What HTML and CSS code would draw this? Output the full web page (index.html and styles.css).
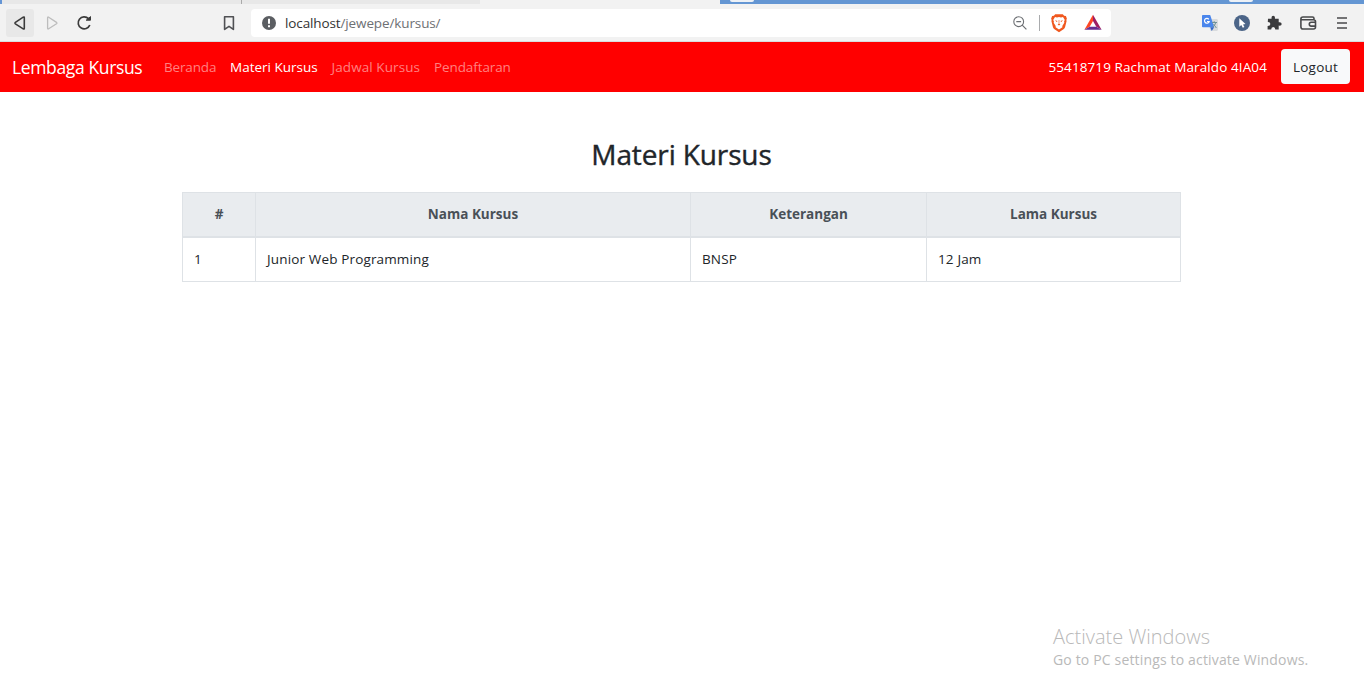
FILE: index.html
```html
<!DOCTYPE html>
<html lang="id">
<head>
<meta charset="utf-8">
<title>Materi Kursus</title>
<link rel="stylesheet" href="styles.css">
</head>
<body>
<header class="browser">
  <div class="tabstrip">
    <span class="tab-edge"></span><span class="tab tab-first"></span><span class="tab"></span><span class="tab-active"></span>
    <span class="frame"><i class="bump"></i><i class="bump"></i></span>
  </div>
  <div class="toolbar">
    <span class="back"><svg width="28" height="28" viewBox="0 0 28 28"><path d="M18.3 8.800v10.400q0 1.200-1.100.6l-7.800-5q-.9-.7 0-1.400l7.800-5.200q1.100-.6 1.100.6z" fill="none" stroke="#3b3b3b" stroke-width="1.600"/></svg></span>
    <svg class="forward" width="28" height="28" viewBox="0 0 28 28"><path d="M9.600 8.800v10.400q0 1.200 1.100.6l7.800-5q.9-.7 0-1.400l-7.800-5.200q-1.100-.6-1.100.6z" fill="none" stroke="#bdbdbd" stroke-width="1.300"/></svg>
    <svg class="reload" width="18" height="18" viewBox="0 0 18 18"><path d="M14.800 11a6 6 0 1 1-1.300-6.300" fill="none" stroke="#3b3b3b" stroke-width="1.700"/><path d="M11.200 6.200h4.300V2.600z" fill="#3b3b3b" stroke="#3b3b3b" stroke-linejoin="round"/></svg>
    <svg class="bookmark" width="14" height="18" viewBox="0 0 14 18"><path d="M2.600 2.700h8.800v12.700L7 12.300l-4.400 3.100z" fill="none" stroke="#505154" stroke-width="1.600" stroke-linejoin="round"/></svg>
    <div class="address">
      <svg class="info" width="14" height="14" viewBox="0 0 14 14"><circle cx="7" cy="7" r="7" fill="#5b5e62"/><path d="M7 2.800v5M7 9.200v2" stroke="#fff" stroke-width="2"/></svg>
      <span class="url"><b>localhost</b>/jewepe/kursus/</span>
      <svg class="magnify" width="16" height="16" viewBox="0 0 16 16"><circle cx="6.700" cy="6.700" r="4.900" fill="none" stroke="#6d7074" stroke-width="1.100"/><path d="M4.300 6.700h4.800M10.200 10.200l4.200 4.200" stroke="#6d7074" stroke-width="1.200"/></svg>
      <span class="divider"></span>
      <svg class="brave" width="18" height="20" viewBox="0 0 18 20"><path d="M5.200 1.200h7.600l1.300 1.500 1.800.3 1 2.700-.6 1.200.3 1-1.500 6.200q-.3 1.200-1.600 2.200L9 19.200l-4.500-2.900q-1.300-1-1.600-2.200L1.400 7.900l.3-1-.6-1.200 1-2.700 1.800-.3z" fill="#f0581f"/><path d="M5 4l2 .4L9 4l2 .4L13 4l1.800 3-.7 1.300.2 1.400-2 3.400.1 1.100L9 16.400l-3.400-2.200.1-1.100-2-3.400.2-1.400L3.200 7z" fill="#fff"/><path d="M5 7.300l2.600.7-.9 1zM13 7.300l-2.600.7.9 1zM8.700 7h.6v3.700l1.100.9L9 12.600l-1.400-1 1.100-.9z" fill="#f0581f"/></svg>
      <svg class="bat" width="18" height="17" viewBox="0 0 18 17"><path d="M9 .8L.4 15.800 5.700 12.700 9 6.900z" fill="#ff4724"/><path d="M9 .8l8.600 15L12.300 12.700 9 6.900z" fill="#9e1f63"/><path d="M.4 15.800h17.200l-5.300-3.100H5.700z" fill="#662d91"/></svg>
    </div>
    <svg class="ext translate" width="16" height="16" viewBox="0 0 16 16"><path d="M5.500 4H15l1 1v10l-1 1H8.500z" fill="#d9dbdd"/><path d="M0 .8Q0 0 .8 0h7.400l4 12.200H.8Q0 12.200 0 11.400z" fill="#4a86ec"/><path d="M8.300 12.200h3.900L9.700 16z" fill="#3367c6"/><path d="M6.800 4.300a2.400 2.400 0 1 0 .4 2.200H5" fill="none" stroke="#fff" stroke-width="1.200"/><path d="M10 7.500h5M12.200 6.200v1.300M13.800 7.500q-.8 3-3 4.500M11.500 9l2.900 4" fill="none" stroke="#6f9198" stroke-width="1"/></svg>
    <svg class="ext cursor" width="16" height="16" viewBox="0 0 16 16"><circle cx="8" cy="8" r="8" fill="#4c6588"/><path d="M5.300 3.200v8.600l2-1.700 1.500 2.700 1.600-.8L9 9.400l2.500-.3z" fill="#fff"/></svg>
    <svg class="ext puzzle" width="16" height="16" viewBox="0 0 16 16"><path d="M2 3.800h3.600q-.5-2.900 1.600-3 2.200.1 1.700 3h3.800v3.500q2.900-.5 3 1.600-.1 2.200-3 1.700v4H9.300q.1-2.500-2.100-2.600-2.100.1-2 2.600H1.600v-3.700q2.700.1 2.800-2-.1-2.100-2.600-2z" fill="#3a3a3c"/></svg>
    <svg class="ext wallet" width="17" height="14" viewBox="0 0 17 14"><path d="M14 3.800V2.500Q14 1 12.500 1H3Q.9 1 .9 3v7.700Q.9 13 3 13h10.500q2 0 2-2V5.500q0-1.700-2-1.700H1.200M15.500 6.300h-4.300q-1.900.1-1.900 1.900.1 1.900 1.900 1.900h4.300" fill="none" stroke="#48494b" stroke-width="1.600"/></svg>
    <svg class="ext menu" width="10" height="12" viewBox="0 0 10 12"><path d="M0 1h10M0 6h10M0 11h10" stroke="#4a4a4c" stroke-width="1.600"/></svg>
  </div>
</header>
<nav class="navbar">
  <a class="brand">Lembaga Kursus</a>
  <a class="link beranda">Beranda</a>
  <a class="link active">Materi Kursus</a>
  <a class="link jadwal">Jadwal Kursus</a>
  <a class="link daftar">Pendaftaran</a>
  <span class="user">55418719 Rachmat Maraldo 4IA04</span>
  <button class="logout">Logout</button>
</nav>
<main class="content">
  <h2>Materi Kursus</h2>
  <table>
    <colgroup><col class="c1"><col class="c2"><col class="c3"><col class="c4"></colgroup>
    <thead><tr><th>#</th><th>Nama Kursus</th><th>Keterangan</th><th>Lama Kursus</th></tr></thead>
    <tbody><tr><td>1</td><td>Junior Web Programming</td><td>BNSP</td><td>12 Jam</td></tr></tbody>
  </table>
</main>
<aside class="watermark"><p>Activate Windows</p><small>Go to PC settings to activate Windows.</small></aside>
</body>
</html>
```
FILE: styles.css
```css
* { box-sizing: border-box; }
body { margin: 0; height: 691px; overflow: hidden; background: #fff; color: #212529; font: 13.5px/21px "Open Sans", "Noto Sans", sans-serif; display: flex; flex-direction: column; }
svg { display: block; flex: none; }

/* Browser chrome */
.browser { height: 42px; background: #f2f2f2; border-bottom: 1px solid #d9dcdc; }
.tabstrip { height: 4px; display: flex; }
.tab-edge { width: 2px; background: #6495d5; }
.tab { width: 238px; background: #e8e8e8; }
.tab-first { width: 240px; border-right: 1px solid #aaa; }
.tab-active { width: 240px; }
.frame { flex: 1; background: #6496d3; display: flex; padding-left: 10px; gap: 475px; }
.bump { width: 24px; height: 2px; background: #edf1f6; border-radius: 0 0 4px 4px; }
.toolbar { height: 37px; display: flex; align-items: center; padding-left: 6px; }
.back { background: #e8e8e8; border-radius: 3px; }
.forward { margin-left: 4px; }
.reload { margin-left: 9px; }
.bookmark { margin-left: 129px; }
.address { margin-left: 15px; width: 860px; height: 28px; border-radius: 4px; background: #fff; display: flex; align-items: center; padding-left: 11px; }
.url { margin-left: 9px; padding-top: 1px; color: #6d7074; letter-spacing: -.12px; }
.url b { font-weight: 400; color: #333; }
.magnify { margin-left: auto; }
.divider { width: 1px; height: 16px; background: #a9abad; margin-left: 11px; }
.brave { margin-left: 10px; }
.bat { margin: 0 9px 0 16px; }
.translate { margin-left: 91px; }
.cursor { margin-left: 16px; }
.puzzle { margin-left: 16px; }
.wallet { margin-left: 18px; }
.menu { margin-left: 20px; }

/* Site navigation */
.navbar { height: 50px; background: #f00; display: flex; align-items: center; padding: 0 14px 0 12px; color: #fff; white-space: nowrap; }
.brand { width: 152px; font-size: 17.5px; letter-spacing: -.36px; }
.link { color: #ff8080; }
.beranda { width: 66px; letter-spacing: -.15px; }
.active { width: 101.500px; color: #fff; }
.jadwal { width: 102.500px; letter-spacing: .08px; }
.daftar { letter-spacing: -.1px; }
.user { margin-left: auto; margin-right: 14px; letter-spacing: .1px; }
.logout { width: 69px; height: 35px; margin-bottom: 1px; border: 0; padding: 2px 0 0; border-radius: 4px; background: #f8f9fa; color: #212529; font: inherit; letter-spacing: .25px; }

/* Course table */
.content { width: 999px; margin: 45px 0 0 182px; }
h2 { margin: 0 0 20px; font: 500 28px/35px "Open Sans", sans-serif; letter-spacing: -.12px; text-align: center; -webkit-text-stroke: .4px #212529; }
table { width: 999px; table-layout: fixed; border-collapse: collapse; }
.c1 { width: 73px; }
.c2 { width: 435px; }
.c3 { width: 236px; }
.c4 { width: 254px; }
th, td { height: 45px; padding: 0 11px; border: 1px solid #dee2e6; }
td { letter-spacing: .15px; padding-top: 1px; }
th { height: 44px; background: #e9ecef; color: #495057; border-bottom-width: 2px; font-weight: 700; text-align: center; }

.watermark { position: absolute; left: 1053px; top: 625px; color: #b9b9b9; white-space: nowrap; }
.watermark p { margin: 0; font-size: 20px; line-height: 24px; font-weight: 300; }
.watermark small { display: inline-block; font-size: 14px; line-height: 21px; letter-spacing: .16px; }
```
